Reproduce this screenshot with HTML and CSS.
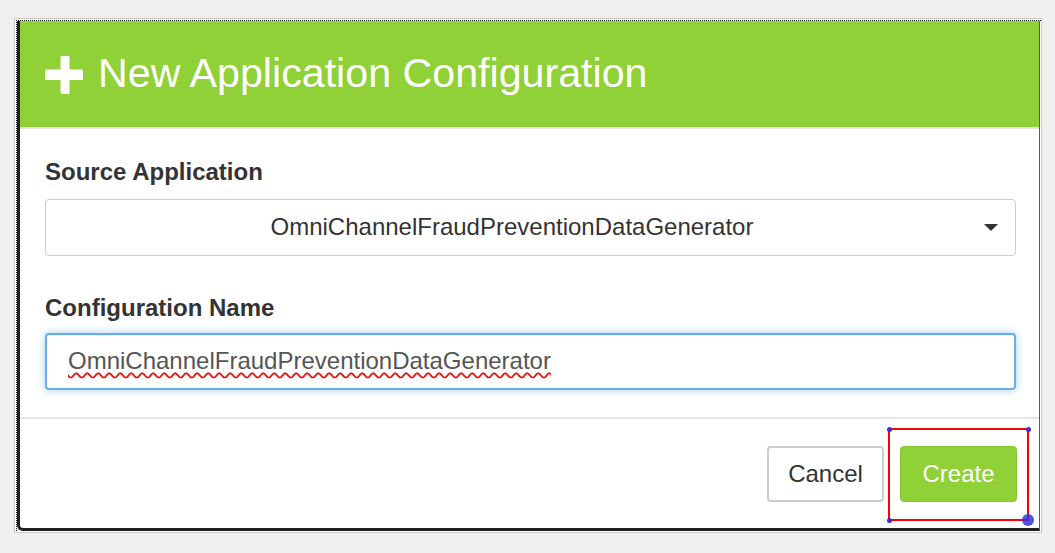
FILE: index.html
```html
<!DOCTYPE html>
<html>
<head>
<meta charset="utf-8">
<link rel="stylesheet" href="styles.css">
</head>
<body>
<div class="frame">
  <div class="focus">
    <div class="modal">
      <div class="modal-header">
        <svg class="plus" width="38" height="38" viewBox="0 0 38 38" aria-hidden="true">
          <path d="M15.5 1.5 Q15.5 0 17 0 H23 Q24.5 0 24.5 1.5 V13.5 H36.5 Q38 13.5 38 15 V22.5 Q38 24 36.5 24 H24.5 V36.5 Q24.5 38 23 38 H17 Q15.5 38 15.5 36.5 V24 H1.5 Q0 24 0 22.5 V15 Q0 13.5 1.5 13.5 H15.5 Z" fill="#fff"/>
        </svg>
        <h1 class="modal-title">New Application Configuration</h1>
      </div>
      <div class="modal-body">
        <div class="form-group">
          <label class="label">Source Application</label>
          <div class="select">
            <span class="select-text">OmniChannelFraudPreventionDataGenerator</span>
            <span class="caret"></span>
          </div>
        </div>
        <div class="form-group second">
          <label class="label">Configuration Name</label>
          <div class="input"><span class="misspelled">OmniChannelFraudPreventionDataGenerator</span></div>
        </div>
      </div>
      <div class="modal-footer">
        <button class="btn btn-default">Cancel</button>
        <div class="selected">
          <button class="btn btn-primary">Create</button>
          <div class="sel-box">
            <span class="dot tl"></span>
            <span class="dot tr"></span>
            <span class="dot bl"></span>
            <span class="dot br"></span>
          </div>
        </div>
      </div>
    </div>
  </div>
</div>
</body>
</html>
```
FILE: styles.css
```css
html, body {
  margin: 0;
  padding: 0;
  background: #f0efee;
  font-family: "Liberation Sans", Arial, sans-serif;
}

.frame {
  margin: 18px 0 0 14px;
  width: 1025px;
  height: 512px;
  border: 1px solid #cacaca;
  padding: 1px 0 0 1px;
  background: #fff;
  box-sizing: content-box;
}

.focus {
  border-top: 1px dotted #111;
  border-left: 1px dotted #111;
  height: 510px;
}

.modal {
  box-sizing: border-box;
  width: 1023px;
  height: 510px;
  background: #fff;
  border-left: 3px solid #1e1e1e;
  border-bottom: 3px solid #1e1e1e;
  border-right: 1px solid #5a5a5a;
  border-bottom-left-radius: 6px;
  display: flex;
  flex-direction: column;
}

.modal-header {
  height: 106px;
  background: #8fd136;
  border-bottom: 2px solid #e6e6e6;
  display: flex;
  align-items: center;
  padding-left: 25px;
  gap: 15px;
}

.plus {
  display: block;
  flex: none;
  margin-top: 2px;
}

.modal-title {
  margin: 0;
  color: #fff;
  font-weight: normal;
  font-size: 41.2px;
  line-height: 1;
  letter-spacing: 0;
}

.modal-body {
  padding: 26px 23px 0 25px;
  height: 288px;
  box-sizing: border-box;
}

.form-group {
  display: flex;
  flex-direction: column;
}

.form-group.second {
  margin-top: 35px;
}

.label {
  font-weight: bold;
  font-size: 24px;
  line-height: 34px;
  color: #333;
  margin-bottom: 10px;
}

.second .label {
  margin-bottom: 8px;
}

.select {
  position: relative;
  height: 57px;
  box-sizing: border-box;
  border: 1px solid #cccccc;
  border-radius: 4px;
  display: flex;
  align-items: center;
  justify-content: center;
  padding: 0 47px 2px 10px;
  font-size: 24px;
  color: #333;
  background: #fff;
}

.caret {
  position: absolute;
  right: 17px;
  top: 24px;
  width: 0;
  height: 0;
  border-left: 7px solid transparent;
  border-right: 7px solid transparent;
  border-top: 7px solid #333;
}

.input {
  height: 57px;
  box-sizing: border-box;
  border: 2px solid #6aaee6;
  border-radius: 4px;
  box-shadow: inset 0 1px 1px rgba(0,0,0,.075), 0 0 8px rgba(102,175,233,.6);
  display: flex;
  align-items: center;
  padding: 0 0 2px 21px;
  font-size: 24px;
  color: #555;
  background: #fff;
}

.misspelled {
  text-decoration: underline wavy #e21a1a;
  text-decoration-thickness: 1.5px;
  text-underline-offset: 3px;
  text-decoration-skip-ink: none;
}

.modal-footer {
  flex: 1;
  border-top: 2px solid #e5e5e5;
  display: flex;
  justify-content: flex-end;
  align-items: flex-start;
  padding: 27px 22px 0 0;
  gap: 16px;
}

.btn {
  margin: 0;
  width: 117px;
  height: 56px;
  box-sizing: border-box;
  border-radius: 4px;
  font-family: "Liberation Sans", Arial, sans-serif;
  font-size: 24px;
  padding: 0;
  cursor: pointer;
}

.btn-default {
  background: #fff;
  border: 2px solid #cccccc;
  color: #333;
}

.btn-primary {
  background: #8fd136;
  border: 1px solid #86c432;
  color: #fff;
}

.selected {
  position: relative;
}

.sel-box {
  position: absolute;
  left: -12px;
  top: -18px;
  width: 141px;
  height: 93px;
  box-sizing: border-box;
  border: 2px solid #ff0000;
}

.dot {
  position: absolute;
  width: 5px;
  height: 5px;
  border-radius: 50%;
  background: #3b2fcf;
}

.dot.tl { left: -3.5px; top: -3.5px; }
.dot.tr { right: -3.5px; top: -3.5px; }
.dot.bl { left: -3.5px; bottom: -3.5px; }
.dot.br {
  right: -7px;
  bottom: -7px;
  width: 12px;
  height: 12px;
  background: rgba(52, 52, 220, 0.85);
}
```
